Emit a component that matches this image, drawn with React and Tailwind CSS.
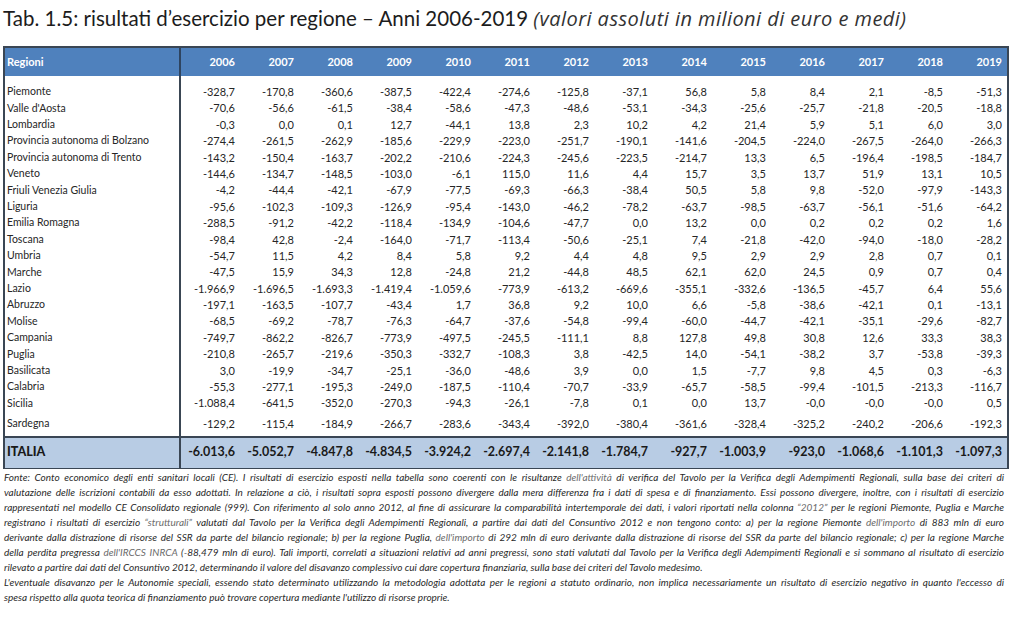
const years = [2006, 2007, 2008, 2009, 2010, 2011, 2012, 2013, 2014, 2015, 2016, 2017, 2018, 2019]

const rows = [
  ['Piemonte', '-328,7 -170,8 -360,6 -387,5 -422,4 -274,6 -125,8 -37,1 56,8 5,8 8,4 2,1 -8,5 -51,3'],
  ["Valle d'Aosta", '-70,6 -56,6 -61,5 -38,4 -58,6 -47,3 -48,6 -53,1 -34,3 -25,6 -25,7 -21,8 -20,5 -18,8'],
  ['Lombardia', '-0,3 0,0 0,1 12,7 -44,1 13,8 2,3 10,2 4,2 21,4 5,9 5,1 6,0 3,0'],
  ['Provincia autonoma di Bolzano', '-274,4 -261,5 -262,9 -185,6 -229,9 -223,0 -251,7 -190,1 -141,6 -204,5 -224,0 -267,5 -264,0 -266,3'],
  ['Provincia autonoma di Trento', '-143,2 -150,4 -163,7 -202,2 -210,6 -224,3 -245,6 -223,5 -214,7 13,3 6,5 -196,4 -198,5 -184,7'],
  ['Veneto', '-144,6 -134,7 -148,5 -103,0 -6,1 115,0 11,6 4,4 15,7 3,5 13,7 51,9 13,1 10,5'],
  ['Friuli Venezia Giulia', '-4,2 -44,4 -42,1 -67,9 -77,5 -69,3 -66,3 -38,4 50,5 5,8 9,8 -52,0 -97,9 -143,3'],
  ['Liguria', '-95,6 -102,3 -109,3 -126,9 -95,4 -143,0 -46,2 -78,2 -63,7 -98,5 -63,7 -56,1 -51,6 -64,2'],
  ['Emilia Romagna', '-288,5 -91,2 -42,2 -118,4 -134,9 -104,6 -47,7 0,0 13,2 0,0 0,2 0,2 0,2 1,6'],
  ['Toscana', '-98,4 42,8 -2,4 -164,0 -71,7 -113,4 -50,6 -25,1 7,4 -21,8 -42,0 -94,0 -18,0 -28,2'],
  ['Umbria', '-54,7 11,5 4,2 8,4 5,8 9,2 4,4 4,8 9,5 2,9 2,9 2,8 0,7 0,1'],
  ['Marche', '-47,5 15,9 34,3 12,8 -24,8 21,2 -44,8 48,5 62,1 62,0 24,5 0,9 0,7 0,4'],
  ['Lazio', '-1.966,9 -1.696,5 -1.693,3 -1.419,4 -1.059,6 -773,9 -613,2 -669,6 -355,1 -332,6 -136,5 -45,7 6,4 55,6'],
  ['Abruzzo', '-197,1 -163,5 -107,7 -43,4 1,7 36,8 9,2 10,0 6,6 -5,8 -38,6 -42,1 0,1 -13,1'],
  ['Molise', '-68,5 -69,2 -78,7 -76,3 -64,7 -37,6 -54,8 -99,4 -60,0 -44,7 -42,1 -35,1 -29,6 -82,7'],
  ['Campania', '-749,7 -862,2 -826,7 -773,9 -497,5 -245,5 -111,1 8,8 127,8 49,8 30,8 12,6 33,3 38,3'],
  ['Puglia', '-210,8 -265,7 -219,6 -350,3 -332,7 -108,3 3,8 -42,5 14,0 -54,1 -38,2 3,7 -53,8 -39,3'],
  ['Basilicata', '3,0 -19,9 -34,7 -25,1 -36,0 -48,6 3,9 0,0 1,5 -7,7 9,8 4,5 0,3 -6,3'],
  ['Calabria', '-55,3 -277,1 -195,3 -249,0 -187,5 -110,4 -70,7 -33,9 -65,7 -58,5 -99,4 -101,5 -213,3 -116,7'],
  ['Sicilia', '-1.088,4 -641,5 -352,0 -270,3 -94,3 -26,1 -7,8 0,1 0,0 13,7 -0,0 -0,0 -0,0 0,5'],
]
const sardegna = ['Sardegna', '-129,2 -115,4 -184,9 -266,7 -283,6 -343,4 -392,0 -380,4 -361,6 -328,4 -325,2 -240,2 -206,6 -192,3']
const italia = '-6.013,6 -5.052,7 -4.847,8 -4.834,5 -3.924,2 -2.697,4 -2.141,8 -1.784,7 -927,7 -1.003,9 -923,0 -1.068,6 -1.101,3 -1.097,3'

function Nums({ values, className = '' }) {
  return (
    <div className={`grid grid-cols-[repeat(14,59px)] ${className}`}>
      {values.split(' ').map((v, i) => (
        <div key={i} className="pr-[5px] text-right">{v}</div>
      ))}
    </div>
  )
}

// righe della nota: quelle piene sono giustificate fino al margine destro
const G = ({ children }) => <span className="text-[#6b6b6b]">{children}</span>
const notes = [
  [true, <>Fonte: Conto economico degli enti sanitari locali (CE). I risultati di esercizio esposti nella tabella sono coerenti con le risultanze <G>dell'attività</G> di verifica del Tavolo per la Verifica degli Adempimenti Regionali, sulla base dei criteri di</>],
  [true, <>valutazione delle iscrizioni contabili da esso adottati. In relazione a ciò, i risultati sopra esposti possono divergere dalla mera differenza fra i dati di spesa e di finanziamento. Essi possono divergere, inoltre, con i risultati di esercizio</>],
  [true, <>rappresentati nel modello CE Consolidato regionale (999). Con riferimento al solo anno 2012, al fine di assicurare la comparabilità intertemporale dei dati, i valori riportati nella colonna <G>“2012”</G> per le regioni Piemonte, Puglia e Marche</>],
  [true, <>registrano i risultati di esercizio <G>“strutturali”</G> valutati dal Tavolo per la Verifica degli Adempimenti Regionali, a partire dai dati del Consuntivo 2012 e non tengono conto: a) per la regione Piemonte <G>dell'importo</G> di 883 mln di euro</>],
  [true, <>derivante dalla distrazione di risorse del SSR da parte del bilancio regionale; b) per la regione Puglia, <G>dell'importo</G> di 292 mln di euro derivante dalla distrazione di risorse del SSR da parte del bilancio regionale; c) per la regione Marche</>],
  [true, <>della perdita pregressa <G>dell'IRCCS INRCA</G> (-88,479 mln di euro). Tali importi, correlati a situazioni relativi ad anni pregressi, sono stati valutati dal Tavolo per la Verifica degli Adempimenti Regionali e si sommano al risultato di esercizio</>],
  [false, <>rilevato a partire dai dati del Consuntivo 2012, determinando il valore del disavanzo complessivo cui dare copertura finanziaria, sulla base dei criteri del Tavolo medesimo.</>],
  [true, <>L'eventuale disavanzo per le Autonomie speciali, essendo stato determinato utilizzando la metodologia adottata per le regioni a statuto ordinario, non implica necessariamente un risultato di esercizio negativo in quanto l'eccesso di</>],
  [false, <>spesa rispetto alla quota teorica di finanziamento può trovare copertura mediante l'utilizzo di risorse proprie.</>],
]

export default function App() {
  return (
    <div className="h-[618px] w-[1024px] overflow-hidden bg-white font-['Lato',sans-serif] text-[#262626]">
      <h1 className="h-[46px] pl-[3px] pt-[5px] text-[20.5px] leading-[26px] text-[#1c1c1c]">
        Tab. 1.5: risultati d’esercizio per regione – Anni 2006-2019{' '}
        <i className="font-['Open_Sans',sans-serif] text-[20px] tracking-[0.45px] text-[#333]">(valori assoluti in milioni di euro e medi)</i>
      </h1>

      <div className="ml-[3px] w-[1006px] border-x-2 border-t-2 border-b border-[#3a4654]">
        <div className="flex h-[28px] items-center bg-[#4f81bd] text-[11px] font-bold text-white">
          <div className="flex h-full w-[176px] shrink-0 items-center border-r-2 border-[#2e4460] pl-[2px]">Regioni</div>
          <div className="grid grid-cols-[repeat(14,59px)]">
            {years.map((y) => (
              <div key={y} className="pr-[5px] text-right">{y}</div>
            ))}
          </div>
        </div>

        <div className="flex border-b-2 border-[#3a4654] text-[11px]">
          <div className="w-[176px] shrink-0 border-r-2 border-[#3a4654] pl-[2px] pt-[8px] text-[10.5px]">
            {rows.map(([name]) => (
              <div key={name} className="flex h-[16.4px] items-center">{name}</div>
            ))}
            <div className="flex h-[24px] items-center">{sardegna[0]}</div>
          </div>
          <div className="pt-[8px]">
            {rows.map(([name, v]) => (
              <Nums key={name} values={v} className="h-[16.4px] items-center" />
            ))}
            <Nums values={sardegna[1]} className="h-[24px] items-center" />
          </div>
        </div>

        <div className="flex h-[30px] bg-[#b8cce4] text-[12.5px] font-bold text-[#1a1a1a]">
          <div className="flex w-[176px] shrink-0 items-center border-r-2 border-[#3a4654] pl-[2px] font-black">ITALIA</div>
          <Nums values={italia} className="items-center" />
        </div>
      </div>

      <div className="w-[1004px] pl-[4px] pt-[1px] text-[10px] italic leading-[15px] text-[#2a2a2a]">
        {notes.map(([full, text], i) => (
          <div key={i} className={full ? '[text-align-last:justify] text-justify' : ''}>{text}</div>
        ))}
      </div>
    </div>
  )
}
